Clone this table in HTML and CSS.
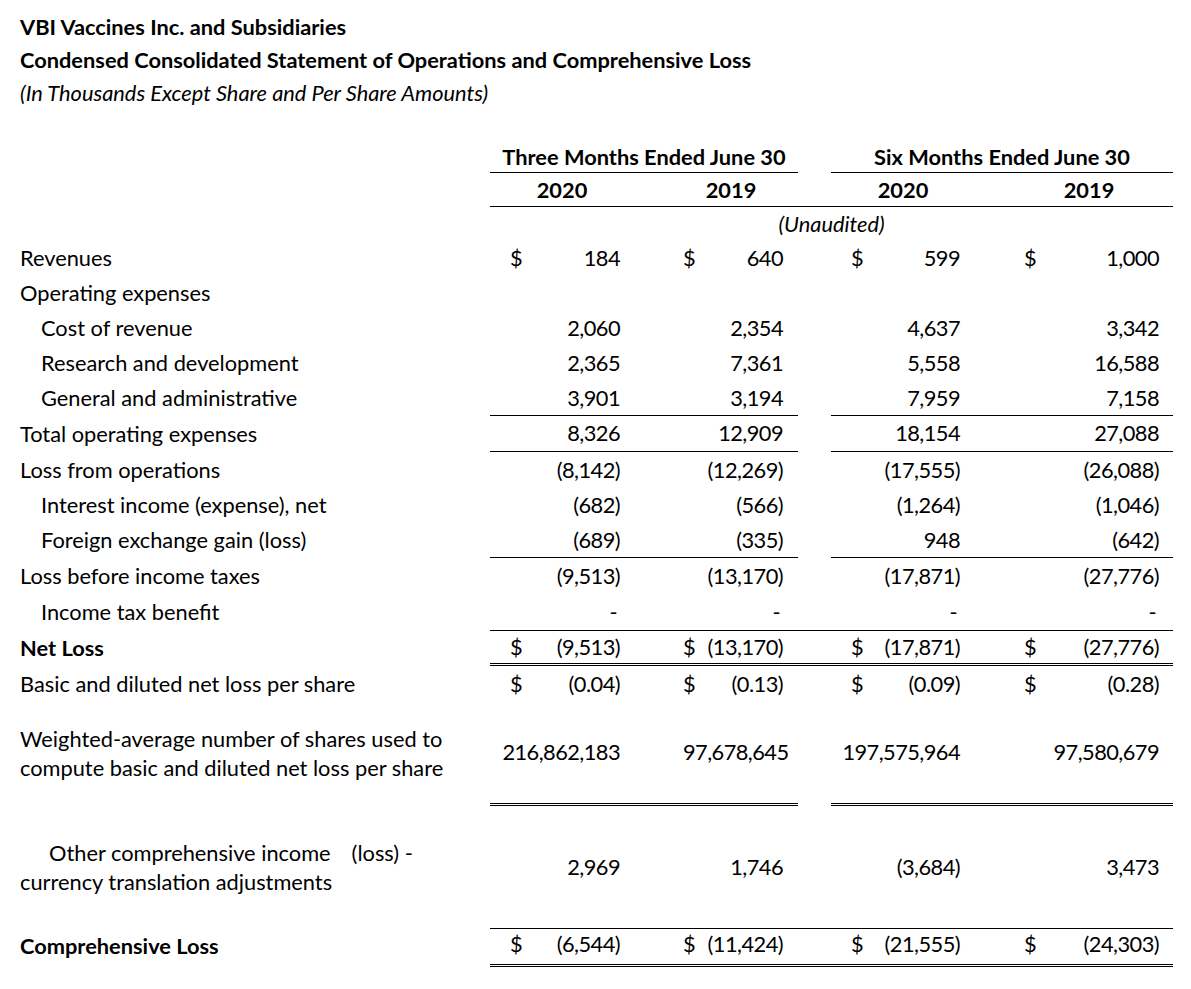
FILE: index.html
```html
<!DOCTYPE html>
<html lang="en">
<head>
<meta charset="utf-8">
<title>VBI Vaccines Inc. — Statement of Operations</title>
<link rel="stylesheet" href="styles.css">
</head>
<body>
<div class="titles">
  <div class="t-bold">VBI Vaccines Inc. and Subsidiaries</div>
  <div class="t-bold">Condensed Consolidated Statement of Operations and Comprehensive Loss</div>
  <div class="t-ital">(In Thousands Except Share and Per Share Amounts)</div>
</div>

<div class="sheet">
  <div class="row h-period">
    <div class="lbl"></div>
    <div class="hd span2 bb">Three Months Ended June 30</div>
    <div class="gap"></div>
    <div class="hd span2 bb">Six Months Ended June 30</div>
  </div>
  <div class="row h-year">
    <div class="lbl"></div>
    <div class="hd bb">2020</div>
    <div class="hd bb yr19">2019</div>
    <div class="gap bb"></div>
    <div class="hd bb">2020</div>
    <div class="hd bb yr19">2019</div>
  </div>
  <div class="row h-unaud">
    <div class="lbl"></div>
    <div class="unaud span5">(Unaudited)</div>
  </div>

  <div class="row r35">
    <div class="lbl">Revenues</div>
    <div class="n c1"><span class="cur">$</span><span class="v">184</span></div>
    <div class="n c2"><span class="cur">$</span><span class="v">640</span></div>
    <div class="gap"></div>
    <div class="n c3"><span class="cur">$</span><span class="v rev">599</span></div>
    <div class="n c4"><span class="cur">$</span><span class="v rev">1,000</span></div>
  </div>
  <div class="row r35">
    <div class="lbl">Operating expenses</div>
    <div class="n c1"></div><div class="n c2"></div><div class="gap"></div><div class="n c3"></div><div class="n c4"></div>
  </div>
  <div class="row r35">
    <div class="lbl ind">Cost of revenue</div>
    <div class="n c1"><span class="v">2,060</span></div>
    <div class="n c2"><span class="v">2,354</span></div>
    <div class="gap"></div>
    <div class="n c3"><span class="v">4,637</span></div>
    <div class="n c4"><span class="v">3,342</span></div>
  </div>
  <div class="row r35">
    <div class="lbl ind">Research and development</div>
    <div class="n c1"><span class="v">2,365</span></div>
    <div class="n c2"><span class="v">7,361</span></div>
    <div class="gap"></div>
    <div class="n c3"><span class="v">5,558</span></div>
    <div class="n c4"><span class="v">16,588</span></div>
  </div>
  <div class="row r35">
    <div class="lbl ind">General and administrative</div>
    <div class="n c1 bb"><span class="v">3,901</span></div>
    <div class="n c2 bb"><span class="v">3,194</span></div>
    <div class="gap"></div>
    <div class="n c3 bb"><span class="v">7,959</span></div>
    <div class="n c4 bb"><span class="v">7,158</span></div>
  </div>
  <div class="row r36">
    <div class="lbl">Total operating expenses</div>
    <div class="n c1 bb"><span class="v">8,326</span></div>
    <div class="n c2 bb"><span class="v">12,909</span></div>
    <div class="gap"></div>
    <div class="n c3 bb"><span class="v">18,154</span></div>
    <div class="n c4 bb"><span class="v">27,088</span></div>
  </div>
  <div class="row r36">
    <div class="lbl">Loss from operations</div>
    <div class="n c1"><span class="v">(8,142)</span></div>
    <div class="n c2"><span class="v">(12,269)</span></div>
    <div class="gap"></div>
    <div class="n c3"><span class="v">(17,555)</span></div>
    <div class="n c4"><span class="v">(26,088)</span></div>
  </div>
  <div class="row r35">
    <div class="lbl ind">Interest income (expense), net</div>
    <div class="n c1"><span class="v">(682)</span></div>
    <div class="n c2"><span class="v">(566)</span></div>
    <div class="gap"></div>
    <div class="n c3"><span class="v">(1,264)</span></div>
    <div class="n c4"><span class="v">(1,046)</span></div>
  </div>
  <div class="row r35">
    <div class="lbl ind">Foreign exchange gain (loss)</div>
    <div class="n c1 bb"><span class="v">(689)</span></div>
    <div class="n c2 bb"><span class="v">(335)</span></div>
    <div class="gap"></div>
    <div class="n c3 bb"><span class="v">948</span></div>
    <div class="n c4 bb"><span class="v">(642)</span></div>
  </div>
  <div class="row r36">
    <div class="lbl">Loss before income taxes</div>
    <div class="n c1"><span class="v">(9,513)</span></div>
    <div class="n c2"><span class="v">(13,170)</span></div>
    <div class="gap"></div>
    <div class="n c3"><span class="v">(17,871)</span></div>
    <div class="n c4"><span class="v">(27,776)</span></div>
  </div>
  <div class="row r37">
    <div class="lbl ind">Income tax benefit</div>
    <div class="n c1 bb"><span class="v dash">-</span></div>
    <div class="n c2 bb"><span class="v dash">-</span></div>
    <div class="gap bb"></div>
    <div class="n c3 bb"><span class="v dash">-</span></div>
    <div class="n c4 bb"><span class="v dash">-</span></div>
  </div>
  <div class="row r35">
    <div class="lbl b">Net Loss</div>
    <div class="n c1 bd"><span class="cur">$</span><span class="v">(9,513)</span></div>
    <div class="n c2 bd"><span class="cur">$</span><span class="v">(13,170)</span></div>
    <div class="gap bd"></div>
    <div class="n c3 bd"><span class="cur">$</span><span class="v">(17,871)</span></div>
    <div class="n c4 bd"><span class="cur">$</span><span class="v">(27,776)</span></div>
  </div>
  <div class="row r36">
    <div class="lbl">Basic and diluted net loss per share</div>
    <div class="n c1"><span class="cur">$</span><span class="v">(0.04)</span></div>
    <div class="n c2"><span class="cur">$</span><span class="v">(0.13)</span></div>
    <div class="gap"></div>
    <div class="n c3"><span class="cur">$</span><span class="v">(0.09)</span></div>
    <div class="n c4"><span class="cur">$</span><span class="v">(0.28)</span></div>
  </div>
  <div class="row r-wavg">
    <div class="lbl two">Weighted-average number of shares used to<br>compute basic and diluted net loss per share</div>
    <div class="n c1 bd wide"><span class="v">216,862,183</span></div>
    <div class="n c2 bd"><span class="v">97,678,645</span></div>
    <div class="gap"></div>
    <div class="n c3 bd wide"><span class="v">197,575,964</span></div>
    <div class="n c4 bd"><span class="v">97,580,679</span></div>
  </div>
  <div class="row r-oci">
    <div class="lbl two"><span class="oci-a">Other comprehensive income</span><span class="oci-b">(loss) -</span><br>currency translation adjustments</div>
    <div class="n c1 bb"><span class="v">2,969</span></div>
    <div class="n c2 bb"><span class="v">1,746</span></div>
    <div class="gap bb"></div>
    <div class="n c3 bb"><span class="v">(3,684)</span></div>
    <div class="n c4 bb"><span class="v">3,473</span></div>
  </div>
  <div class="row r-comp">
    <div class="lbl b">Comprehensive Loss</div>
    <div class="n c1 bd"><span class="cur">$</span><span class="v">(6,544)</span></div>
    <div class="n c2 bd"><span class="cur">$</span><span class="v">(11,424)</span></div>
    <div class="gap bd"></div>
    <div class="n c3 bd"><span class="cur">$</span><span class="v">(21,555)</span></div>
    <div class="n c4 bd"><span class="cur">$</span><span class="v">(24,303)</span></div>
  </div>
</div>
</body>
</html>
```

FILE: styles.css
```css
html, body {
  margin: 0;
  padding: 0;
  background: #ffffff;
}

body {
  font-family: "Lato", "Open Sans", "Liberation Sans", sans-serif;
  font-size: 21.8px;
  color: #000000;
  font-variant-numeric: tabular-nums;
}

.titles {
  box-sizing: border-box;
  height: 141px;
  padding: 10px 0 0 20px;
  line-height: 33px;
}

.t-bold {
  font-weight: 700;
}

.t-ital {
  font-style: italic;
}

.sheet {
  width: 1173px;
}

.row {
  display: grid;
  grid-template-columns: 490px 144px 164px 33px 144px 198px;
}

.row > div {
  box-sizing: border-box;
  display: flex;
  align-items: center;
  padding-bottom: 2px;
}

.h-period > div,
.h-year > div {
  padding-bottom: 0;
}

.h-period { height: 32px; }
.h-year   { height: 34px; }
.h-unaud  { height: 34px; }
.r35 { height: 35px; }
.r36 { height: 36px; }
.r37 { height: 37px; }
.r-wavg { height: 104px; }
.r-oci  { height: 123px; }
.r-comp { height: 38px; }

.r-comp > div {
  padding-bottom: 6px;
}

.lbl {
  padding-left: 20px;
  white-space: nowrap;
}

.lbl.ind {
  padding-left: 41px;
}

.lbl.b {
  font-weight: 700;
}

.lbl.two {
  line-height: 29px;
  display: block !important;
  align-self: center;
}

.oci-a {
  padding-left: 29px;
}

.oci-b {
  padding-left: 21px;
}

.hd {
  font-weight: 700;
  justify-content: center;
}

.span2 {
  grid-column: span 2;
}

.span5 {
  grid-column: span 5;
}

.yr19 {
  padding-left: 30px;
}

.unaud {
  justify-content: center;
  font-style: italic;
}

.bb {
  border-bottom: 1px solid #000;
}

.bd {
  border-bottom: 3px double #000;
}

.n .v {
  margin-left: auto;
  letter-spacing: -0.55px;
}

.c1 { padding-left: 20px; padding-right: 14px; }
.c2 { padding-left: 49px; padding-right: 15px; }
.c3 { padding-left: 20px; padding-right: 15px; }
.c4 { padding-left: 49px; padding-right: 14px; }

.n.wide {
  padding-left: 0;
}

.v.dash {
  padding-right: 3px;
}
```
